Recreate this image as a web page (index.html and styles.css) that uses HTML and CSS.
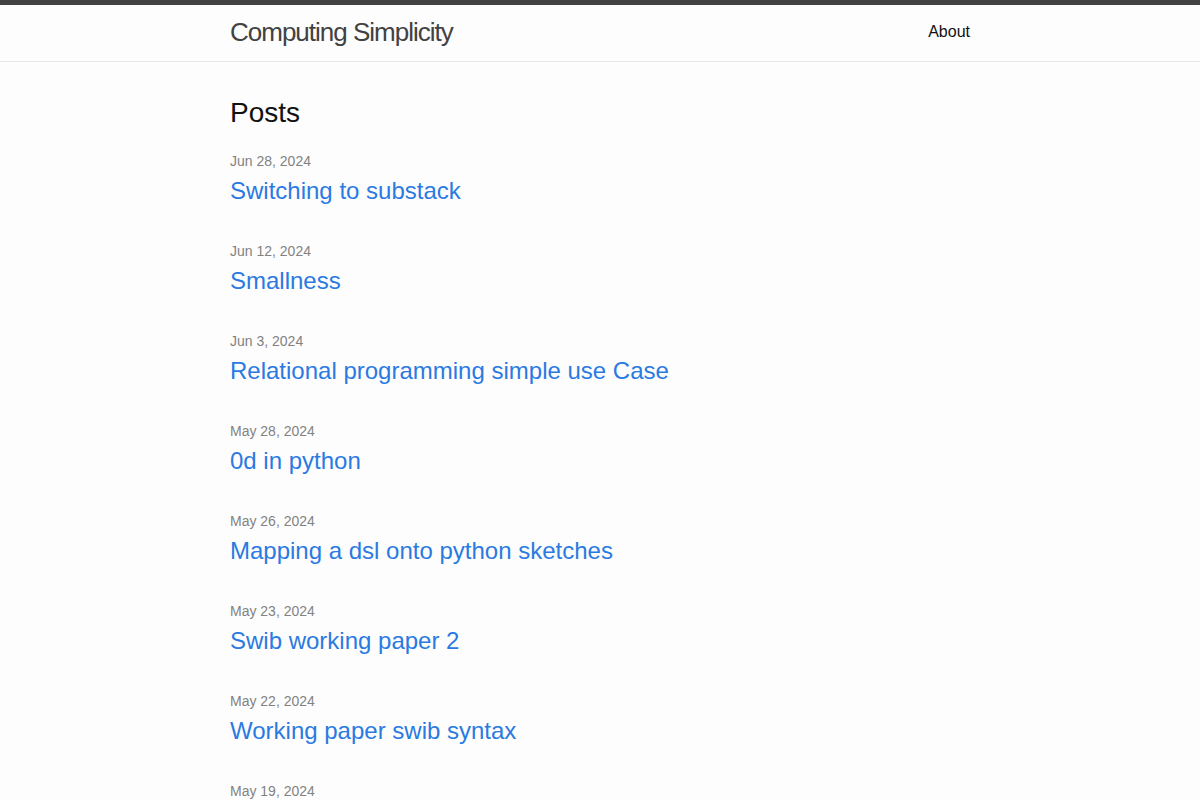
FILE: index.html
```html
<!DOCTYPE html>
<html lang="en">

<head>
	<meta charset="UTF-8">
	<meta name="viewport" content="width=device-width, initial-scale=1.0">
	<title>Computing Simplicity</title>
	<link rel="stylesheet" href="styles.css">
</head>

<body>
	<header class="site-header">
		<div class="wrapper header-row">
			<a class="site-title" href="#">Computing Simplicity</a>
			<nav class="site-nav">
				<a class="page-link" href="#">About</a>
			</nav>
		</div>
	</header>

	<main class="page-content">
		<div class="wrapper">
			<h2 class="post-list-heading">Posts</h2>
			<ul class="post-list">
				<li>
					<span class="post-meta">Jun 28, 2024</span>
					<h3><a class="post-link" href="#">Switching to substack</a></h3>
				</li>
				<li>
					<span class="post-meta">Jun 12, 2024</span>
					<h3><a class="post-link" href="#">Smallness</a></h3>
				</li>
				<li>
					<span class="post-meta">Jun 3, 2024</span>
					<h3><a class="post-link" href="#">Relational programming simple use Case</a></h3>
				</li>
				<li>
					<span class="post-meta">May 28, 2024</span>
					<h3><a class="post-link" href="#">0d in python</a></h3>
				</li>
				<li>
					<span class="post-meta">May 26, 2024</span>
					<h3><a class="post-link" href="#">Mapping a dsl onto python sketches</a></h3>
				</li>
				<li>
					<span class="post-meta">May 23, 2024</span>
					<h3><a class="post-link" href="#">Swib working paper 2</a></h3>
				</li>
				<li>
					<span class="post-meta">May 22, 2024</span>
					<h3><a class="post-link" href="#">Working paper swib syntax</a></h3>
				</li>
				<li>
					<span class="post-meta">May 19, 2024</span>
					<h3><a class="post-link" href="#">Working paper swib</a></h3>
				</li>
			</ul>
		</div>
	</main>
</body>

</html>
```

FILE: styles.css
```css
* {
	box-sizing: border-box;
}

body {
	margin: 0;
	background-color: #fdfdfd;
	color: #111;
	font: 400 16px/1.5 "Liberation Sans", Arial, sans-serif;
}

a {
	text-decoration: none;
}

.wrapper {
	max-width: 800px;
	margin: 0 auto;
	padding: 0 30px;
}

.site-header {
	box-sizing: content-box;
	border-top: 5px solid #424242;
	border-bottom: 1px solid #e8e8e8;
	min-height: 56px;
}

.header-row {
	display: flex;
	justify-content: space-between;
	align-items: center;
	min-height: 56px;
	padding-bottom: 2px;
}

.site-title {
	font-size: 26px;
	line-height: 54px;
	letter-spacing: -1px;
	font-weight: 300;
	color: #424242;
}

.page-link {
	color: #111;
	line-height: 54px;
}

.page-content {
	padding: 30px 0;
}

.post-list-heading {
	font-size: 28px;
	font-weight: 400;
	line-height: 42px;
	margin: 0 0 16px;
}

.post-list {
	margin: 0;
	padding: 0;
	list-style: none;
}

.post-list li {
	margin-bottom: 31px;
}

.post-meta {
	display: block;
	font-size: 14px;
	line-height: 23px;
	color: #828282;
}

.post-list h3 {
	margin: 0;
	font-weight: 400;
}

.post-link {
	display: block;
	font-size: 24px;
	line-height: 36px;
	color: #2a7ae2;
}
```
